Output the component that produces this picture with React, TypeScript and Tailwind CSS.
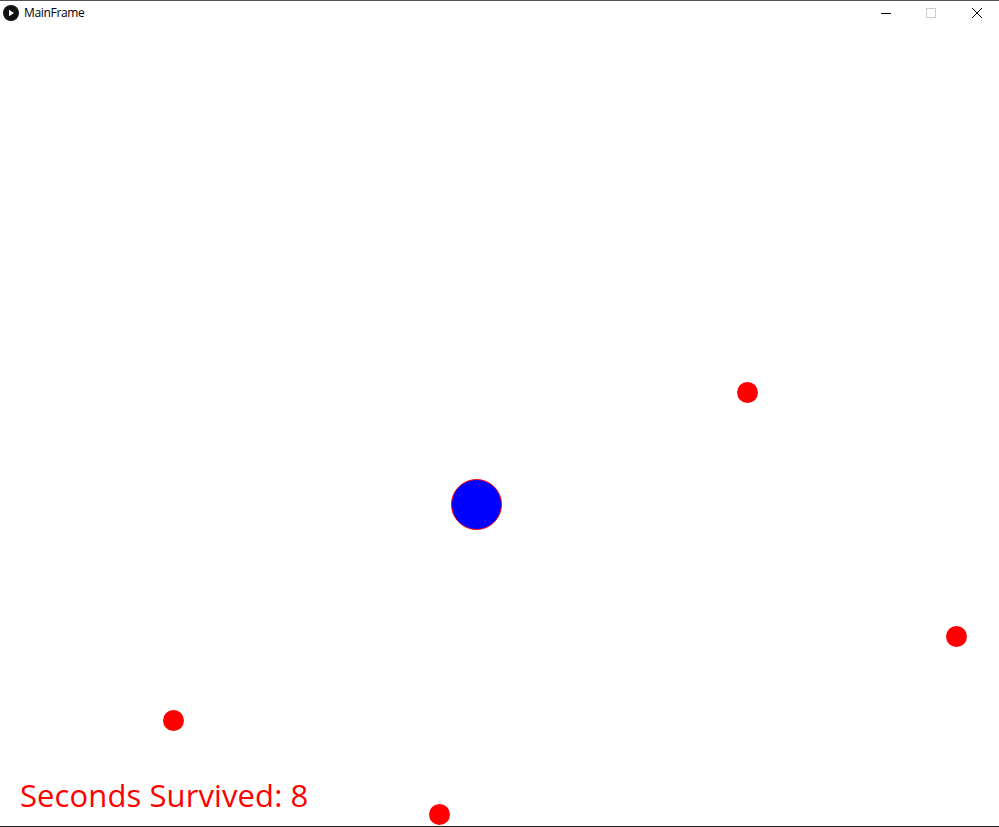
const dots = [
  { id: "a", cx: 747, cy: 392 },
  { id: "b", cx: 956, cy: 636 },
  { id: "c", cx: 173, cy: 720 },
  { id: "d", cx: 439, cy: 814 },
];

export default function App() {
  return (
    <div className="flex h-[827px] w-[999px] flex-col overflow-hidden border-t border-b border-t-[#555555] border-b-[#222222] bg-white">
      <div className="flex h-[29px] shrink-0 items-start justify-between">
        <div className="flex items-center gap-[5px] pl-[3px] pt-[4px]">
          <svg width="16" height="16" viewBox="0 0 16 16">
            <circle cx="8" cy="8" r="8" fill="#111111" />
            <path d="M6 4.8 L11 8 L6 11.2 Z" fill="#ffffff" />
          </svg>
          <span className="text-[12px] leading-[16px] tracking-[-0.33px] text-black [font-family:'Open_Sans','Noto_Sans',sans-serif]">MainFrame</span>
        </div>
        <div className="flex w-[136px] items-start pt-[7px]">
          <svg className="ml-[18px] shrink-0" width="10" height="10" viewBox="0 0 10 10"><path d="M0 5.5 H10" stroke="#000" strokeWidth="1" /></svg>
          <svg className="ml-[35px] shrink-0" width="10" height="10" viewBox="0 0 10 10"><rect x="0.5" y="0.5" width="9" height="9" fill="none" stroke="#cccccc" strokeWidth="1" /></svg>
          <svg className="ml-[36px] shrink-0" width="10" height="10" viewBox="0 0 10 10"><path d="M0 0 L10 10 M10 0 L0 10" stroke="#000" strokeWidth="1" /></svg>
        </div>
      </div>
      <div className="relative flex-1">
        <div className="absolute left-[451px] top-[449px] h-[51px] w-[51px] rounded-full border border-[#ff0000] bg-[#0000ff]" />
        {dots.map((d) => (
          <div
            key={d.id}
            className="absolute h-[21px] w-[21px] rounded-full bg-[#ff0000]"
            style={{ left: d.cx - 10.5, top: d.cy - 10.5 - 30 }}
          />
        ))}
        <div className="absolute left-[20px] top-[745px] text-[31px] leading-[40px] tracking-[0.1px] whitespace-nowrap text-[#ff0000] [font-family:'Open_Sans',sans-serif]">
          Seconds Survived: 8
        </div>
      </div>
    </div>
  );
}
